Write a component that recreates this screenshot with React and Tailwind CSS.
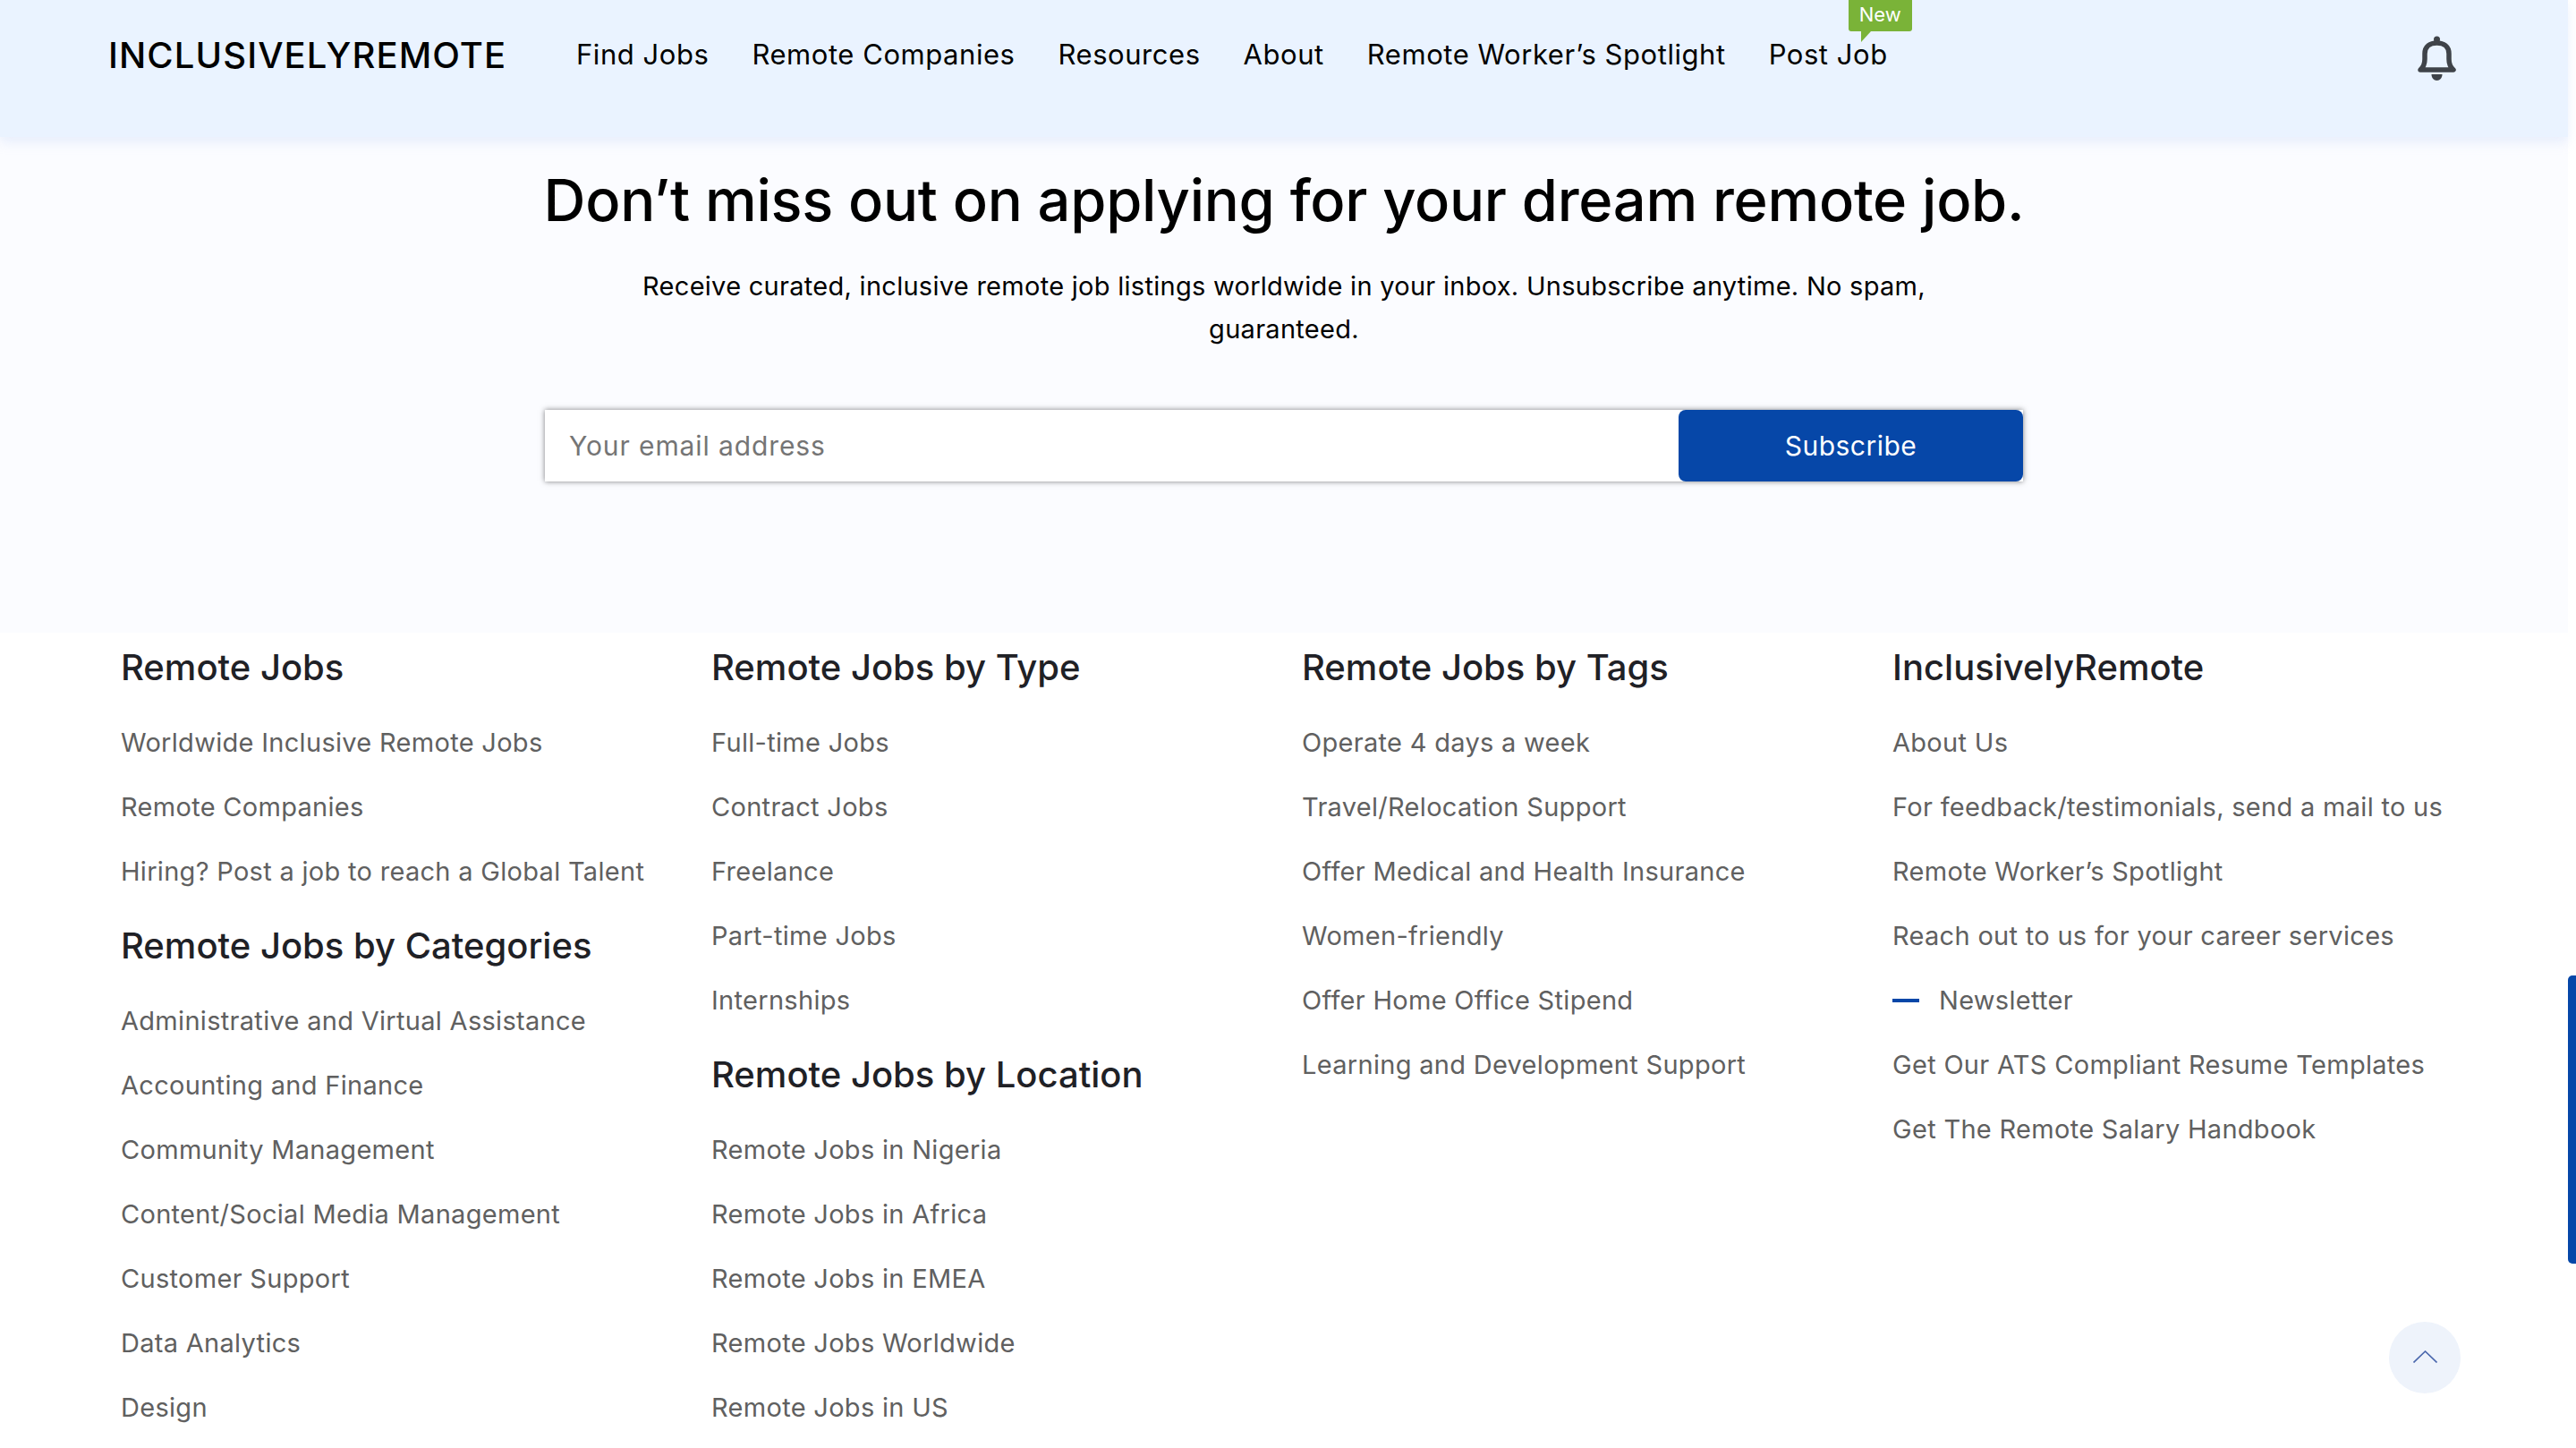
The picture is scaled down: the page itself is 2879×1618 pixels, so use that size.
const columns = [
  [
    { title: "Remote Jobs", links: ["Worldwide Inclusive Remote Jobs", "Remote Companies", "Hiring? Post a job to reach a Global Talent"] },
    {
      title: "Remote Jobs by Categories",
      links: ["Administrative and Virtual Assistance", "Accounting and Finance", "Community Management", "Content/Social Media Management", "Customer Support", "Data Analytics", "Design"],
    },
  ],
  [
    { title: "Remote Jobs by Type", links: ["Full-time Jobs", "Contract Jobs", "Freelance", "Part-time Jobs", "Internships"] },
    { title: "Remote Jobs by Location", links: ["Remote Jobs in Nigeria", "Remote Jobs in Africa", "Remote Jobs in EMEA", "Remote Jobs Worldwide", "Remote Jobs in US"] },
  ],
  [
    {
      title: "Remote Jobs by Tags",
      links: ["Operate 4 days a week", "Travel/Relocation Support", "Offer Medical and Health Insurance", "Women-friendly", "Offer Home Office Stipend", "Learning and Development Support"],
    },
  ],
  [
    {
      title: "InclusivelyRemote",
      links: [
        "About Us",
        "For feedback/testimonials, send a mail to us",
        "Remote Worker’s Spotlight",
        "Reach out to us for your career services",
        "Newsletter",
        "Get Our ATS Compliant Resume Templates",
        "Get The Remote Salary Handbook",
      ],
    },
  ],
];

const navLinks = ["Find Jobs", "Remote Companies", "Resources", "About", "Remote Worker’s Spotlight"];

function BellIcon() {
  return (
    <svg viewBox="0 0 43 50" className="h-[50px] w-[43px] text-[#3f4349]" fill="none">
      <circle cx="21.5" cy="4" r="3.5" fill="currentColor" />
      <path
        d="M3 38C6.5 35 8 31 8 26V20C8 12 14 8 21.5 8C29 8 35 12 35 20V26C35 31 36.5 35 40 38Z"
        stroke="currentColor"
        strokeWidth="5.5"
        strokeLinejoin="round"
      />
      <path d="M15.5 43H27.5C27.5 47 25 50 21.5 50C18 50 15.5 47 15.5 43Z" fill="currentColor" />
    </svg>
  );
}

export default function App() {
  return (
    <div className="relative flex h-screen overflow-hidden bg-white font-[Inter,sans-serif]">
      <main className="w-[2870px] shrink-0">
        <header className="relative z-10 flex h-[153px] items-start bg-[#eaf3ff] pl-[121px] pr-[125px] pt-[40px] shadow-[0_6px_12px_rgba(190,210,245,0.3)]">
          <a className="w-[523px] shrink-0 text-[40px] leading-[44px] font-medium tracking-[1.1px] text-black">INCLUSIVELYREMOTE</a>
          <nav className="flex gap-[48px] text-[31px] leading-[42px] tracking-[0.55px] text-black">
            {navLinks.map((label) => (
              <a key={label} className="whitespace-nowrap">{label}</a>
            ))}
            <a className="relative whitespace-nowrap">
              Post Job
              <span className="absolute left-[89px] top-[-40px] flex h-[35px] w-[71px] items-center justify-center rounded-b-[3px] bg-[#7ab338] pb-[3px] text-[22px] leading-none tracking-normal text-white">
                New
                <span className="absolute left-[14px] top-[35px] h-0 w-0 border-r-[11px] border-t-[12px] border-r-transparent border-t-[#7ab338]" />
              </span>
            </a>
          </nav>
          <div className="ml-auto">
            <BellIcon />
          </div>
        </header>

        <section className="h-[554px] bg-[#fbfcff] pt-[26px]">
          <div className="mx-auto flex w-[1652px] flex-col items-center">
            <h1 className="whitespace-nowrap text-[65px] leading-[90px] font-medium tracking-[-0.28px] text-black">Don’t miss out on applying for your dream remote job.</h1>
            <p className="mt-[27px] w-[1450px] text-center text-[29px] leading-[48px] tracking-[0.28px] text-black">
              Receive curated, inclusive remote job listings worldwide in your inbox. Unsubscribe anytime. No spam, guaranteed.
            </p>
            <form className="mt-[66px] flex h-[80px] w-full bg-white shadow-[0_0_6px_rgba(0,0,0,0.5)]">
              <input
                type="email"
                placeholder="Your email address"
                className="min-w-0 flex-1 bg-white pl-[27px] text-[30px] tracking-[0.9px] text-black outline-none placeholder:text-[#757575]"
              />
              <button type="button" className="w-[385px] rounded-[8px] bg-[#0647a8] text-[30px] tracking-[0.5px] text-white">Subscribe</button>
            </form>
          </div>
        </section>

        <footer className="grid grid-cols-[660px_660px_660px_660px] pl-[135px] pt-[1px]">
          {columns.map((groups, i) => (
            <div key={i}>
              {groups.map((group, g) => (
                <div key={group.title} className={g > 0 ? "mt-[9px]" : ""}>
                  <h3 className="mb-[10px] h-[76px] text-[40px] leading-[76px] font-medium text-[#1f2126]">{group.title}</h3>
                  <ul>
                    {group.links.map((link) => (
                      <li key={link} className="flex h-[72px] items-center whitespace-nowrap text-[29px] tracking-[0.3px] text-[#606060]">
                        {link === "Newsletter" && <span className="mr-[22px] h-[4px] w-[30px] bg-[#0647a8]" />}
                        {link}
                      </li>
                    ))}
                  </ul>
                </div>
              ))}
            </div>
          ))}
        </footer>
      </main>

      <aside className="w-[9px] shrink-0 bg-white pt-[1090px]">
        <div className="h-[322px] rounded-l-[5px] bg-[#0647a8]" />
      </aside>

      <button className="absolute left-[2670px] top-[1477px] flex h-[80px] w-[80px] items-center justify-center rounded-full bg-[#eef3fb]">
        <svg viewBox="0 0 27 14" className="mb-[2px] h-[14px] w-[27px] text-[#4a67ad]" fill="none">
          <path d="M0.5 13.5L13.5 1L26.5 13.5" stroke="currentColor" strokeWidth="1.6" />
        </svg>
      </button>
    </div>
  );
}
